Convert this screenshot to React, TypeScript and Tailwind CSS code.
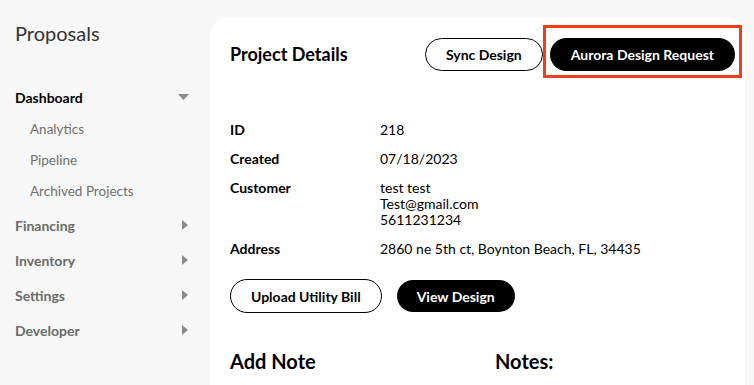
import React from "react";

const subItems = ["Analytics", "Pipeline", "Archived Projects"];
const sections = ["Financing", "Inventory", "Settings", "Developer"];

const details: { label: string; value: string[] }[] = [
  { label: "ID", value: ["218"] },
  { label: "Created", value: ["07/18/2023"] },
  { label: "Customer", value: ["test test", "Test@gmail.com", "5611231234"] },
  { label: "Address", value: ["2860 ne 5th ct, Boynton Beach, FL, 34435"] },
];

function CaretRight() {
  return (
    <svg width="6" height="10" viewBox="0 0 6 10" className="fill-[#8a8a8a]">
      <path d="M0 0 L6 5 L0 10 Z" />
    </svg>
  );
}

function CaretDown() {
  return (
    <svg width="11" height="6" viewBox="0 0 11 6" className="fill-[#8a8a8a]">
      <path d="M0 0 L11 0 L5.5 6 Z" />
    </svg>
  );
}

export default function App() {
  return (
    <div className="flex h-[385px] w-[754px] overflow-hidden bg-[#f7f7f7] font-['Lato',sans-serif] text-black">
      <aside className="w-[210px] shrink-0 pl-[15px] pr-[21px] pt-[20px]">
        <h1 className="text-[20px] leading-[26px] text-[#333]">Proposals</h1>
        <nav className="mt-[41px]">
          <div className="flex h-[20px] items-center justify-between">
            <span className="text-[14px] font-bold">Dashboard</span>
            <CaretDown />
          </div>
          <ul className="mt-[12px] flex flex-col gap-[11px] pl-[15px] text-[13.5px] text-[#6f6f6f]">
            {subItems.map((item) => (
              <li key={item} className="leading-[20px]">{item}</li>
            ))}
          </ul>
          <ul className="mt-[14px] flex flex-col gap-[15px]">
            {sections.map((s) => (
              <li key={s} className="flex h-[20px] items-center justify-between pr-[1px]">
                <span className="text-[14px] font-bold text-[#6a6a6a]">{s}</span>
                <CaretRight />
              </li>
            ))}
          </ul>
        </nav>
      </aside>

      <main className="mt-[17px] mr-[9px] flex-1 rounded-tl-[20px] rounded-tr-[20px] bg-white pl-[20px] pr-[3px]">
        <div className="flex items-start justify-between pt-[8px]">
          <h2 className="mt-[17px] text-[18px] font-bold leading-[24px]">Project Details</h2>
          <div className="flex items-start">
            <button className="mt-[13px] h-[33px] rounded-full border border-black px-[20px] text-[14px] font-bold">
              Sync Design
            </button>
            <div className="border-[3px] border-[#f23c1c] px-[4px] pt-[10px] pb-[4px]">
              <button className="h-[33px] rounded-full bg-black px-[21px] text-[14px] font-bold text-white">
                Aurora Design Request
              </button>
            </div>
          </div>
        </div>

        <dl className="mt-[42px] flex flex-col gap-[9px] text-[14px]">
          {details.map((d) => (
            <div key={d.label} className="flex">
              <dt className="w-[150px] font-bold leading-[20px]">{d.label}</dt>
              {d.value.length > 1 ? (
                <dd className="pt-[2px] pb-[2px] leading-[16px]">
                  {d.value.map((v) => (
                    <div key={v}>{v}</div>
                  ))}
                </dd>
              ) : (
                <dd className="leading-[20px]">{d.value[0]}</dd>
              )}
            </div>
          ))}
        </dl>

        <div className="mt-[20px] flex items-center gap-[15px]">
          <button className="h-[34px] rounded-full border border-black px-[20px] text-[14px] font-bold">
            Upload Utility Bill
          </button>
          <button className="h-[32px] rounded-full bg-black px-[20px] text-[14px] font-bold text-white">
            View Design
          </button>
        </div>

        <div className="mt-[34px] flex">
          <h3 className="w-[265px] text-[20px] font-bold leading-[28px]">Add Note</h3>
          <h3 className="text-[20px] font-bold leading-[28px]">Notes:</h3>
        </div>
      </main>
    </div>
  );
}
